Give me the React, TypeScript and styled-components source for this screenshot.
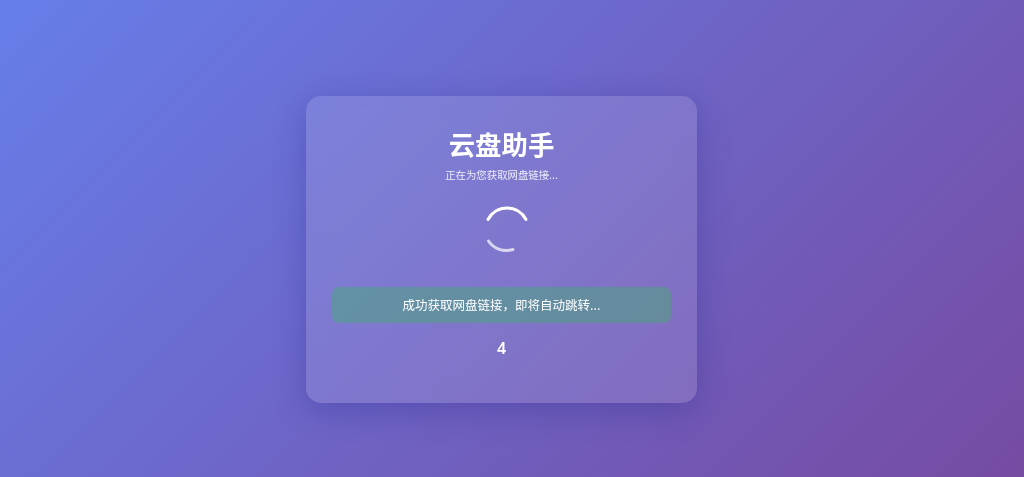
import React from 'react';
import { createGlobalStyle, styled } from 'styled-components';

const GlobalStyle = createGlobalStyle`
  * {
    box-sizing: border-box;
  }

  html,
  body {
    margin: 0;
    padding: 0;
    height: 100%;
  }

  body {
    font-family: 'Noto Sans CJK SC', 'Noto Sans', sans-serif;
    color: #fff;
    background: linear-gradient(135deg, #667eea 0%, #764ba2 100%);
  }
`;

const Spinner = () => (
  <SpinnerBox>
    <svg width='50' height='50' viewBox='0 0 50 50'>
      <path
        d='M 6 14.5 A 21.5 21.5 0 0 1 44 14.5'
        fill='none'
        stroke='#fff'
        strokeWidth='3'
        strokeLinecap='round'
      />
      <path
        d='M 31 44.5 A 21.5 21.5 0 0 1 6.5 36'
        fill='none'
        stroke='rgba(255,255,255,0.7)'
        strokeWidth='3'
        strokeLinecap='round'
      />
    </svg>
  </SpinnerBox>
);

const App = () => {
  return (
    <>
      <GlobalStyle />
      <Page>
        <Card>
          <Title>云盘助手</Title>
          <Subtitle>正在为您获取网盘链接...</Subtitle>
          <Spinner />
          <Message>成功获取网盘链接，即将自动跳转...</Message>
          <Countdown>4</Countdown>
        </Card>
      </Page>
    </>
  );
};

export default App;

const Page = styled.div`
  min-height: 100vh;
  display: flex;
  align-items: center;
  justify-content: center;
  padding: 22px 21px 0 0;
`;

const Card = styled.div`
  width: 391px;
  padding: 32px 26px 45px;
  display: flex;
  flex-direction: column;
  align-items: center;
  background: rgba(255, 255, 255, 0.12);
  border-radius: 15px;
  box-shadow: 0 8px 32px rgba(31, 38, 135, 0.3);
  backdrop-filter: blur(10px);
`;

const Title = styled.h1`
  margin: 0 0 8px;
  font-size: 26.4px;
  line-height: 31px;
  font-weight: 700;
`;

const Subtitle = styled.p`
  margin: 0;
  font-size: 10.4px;
  line-height: 16px;
  opacity: 0.85;
`;

const SpinnerBox = styled.div`
  width: 50px;
  height: 50px;
  margin: 22px 0 32px;
  transform: translateX(5px);
`;

const Message = styled.div`
  width: 100%;
  padding: 10px 12px;
  border-radius: 7px;
  background: rgba(60, 180, 100, 0.4);
  font-size: 12.5px;
  line-height: 16px;
  text-align: center;
`;

const Countdown = styled.div`
  margin-top: 15px;
  font-family: 'Noto Sans', sans-serif;
  font-size: 16px;
  line-height: 20px;
  font-weight: 600;
`;
